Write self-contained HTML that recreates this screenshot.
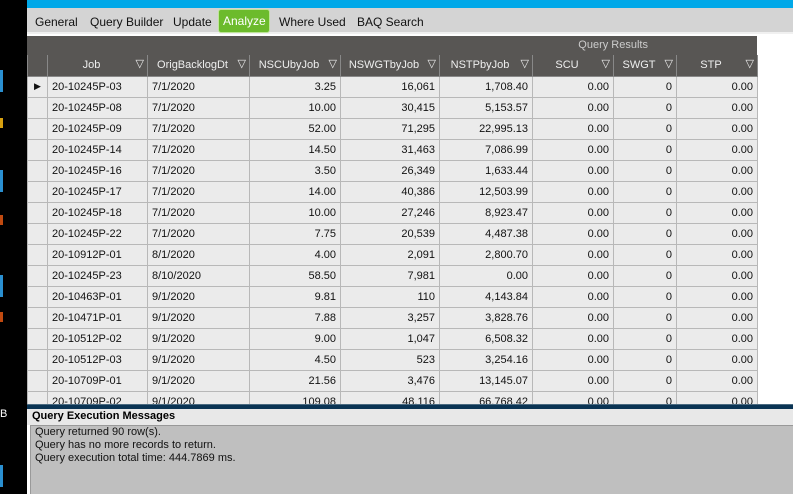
<!DOCTYPE html>
<html><head><style>
*{margin:0;padding:0;box-sizing:border-box}
body{width:793px;height:494px;overflow:hidden;background:#000;font-family:"Liberation Sans",Arial,sans-serif;font-size:11px;position:relative}
#main{position:absolute;left:27px;top:0;width:766px;height:494px;background:#fff}
#top{position:absolute;left:0;top:0;width:766px;height:8px;background:#00a8e8}
#tabs{position:absolute;left:0;top:8px;width:766px;height:26px;background:#d4d4d4;border-bottom:2px solid #f0f0f0}
.tab{position:absolute;top:7px;font-size:12px;color:#111}
#an{position:absolute;left:191px;top:1px;width:52px;height:24px;background:#6cbb2c;border:1px solid #bfe59a;border-radius:3px;color:#fff;font-size:12px;padding:4px 0 0 4px}
#qr{position:absolute;left:0;top:36px;width:730px;height:20px;background:#585654;color:#ccc;font-size:11px;text-align:right;padding:3px 109px 0 0}
table{position:absolute;left:0;top:55px;border-collapse:collapse;table-layout:fixed}
th{background:#585654;color:#eee;font-weight:normal;height:21px;border:1px solid #888;border-top:none;font-size:11px;position:relative;text-align:center;padding-right:12px}
th span{position:absolute;right:3px;top:2px;font-size:11px}
td{height:21px;border:1px solid #b8b8b8;background:#ebebeb;color:#111;padding:0 4px;white-space:nowrap;overflow:hidden;font-size:11px}
td.r{text-align:right}
td.h{background:#ebebeb;padding:0}
#sep{position:absolute;left:0;top:404px;width:766px;height:5px;background:#0a3454;border-top:1px solid #4a6a80}
#mh{position:absolute;left:0;top:409px;width:766px;height:16px;background:#e8e8e8;font-weight:bold;font-size:11px;padding:1px 0 0 5px}
#mb{position:absolute;left:3px;top:425px;width:763px;height:69px;background:#bfbfbf;border-top:1px solid #999;border-left:1px solid #999;padding:0 0 0 4px;font-size:11px;line-height:13px;color:#111}
.ls{position:absolute;left:0;width:3px;height:22px;background:#2a8fd0}
</style></head><body>
<div class="ls" style="top:70px"></div>
<div class="ls" style="top:170px"></div>
<div class="ls" style="top:275px"></div>
<div class="ls" style="top:465px"></div>
<div style="position:absolute;left:0;top:118px;width:3px;height:10px;background:#d7a010"></div>
<div style="position:absolute;left:0;top:215px;width:3px;height:10px;background:#c04a10"></div>
<div style="position:absolute;left:0;top:312px;width:3px;height:10px;background:#c04a10"></div>
<div style="position:absolute;left:0;top:408px;color:#fff;font-size:11px">B</div>
<div id="main">
<div id="top"></div>
<div id="tabs">
<span class="tab" style="left:8px">General</span>
<span class="tab" style="left:63px">Query Builder</span>
<span class="tab" style="left:146px">Update</span>
<div id="an">Analyze</div>
<span class="tab" style="left:252px">Where Used</span>
<span class="tab" style="left:330px">BAQ Search</span>
</div>
<div id="qr">Query Results</div>
<table>
<colgroup><col style="width:20px"><col style="width:100px"><col style="width:102px"><col style="width:91px"><col style="width:99px"><col style="width:93px"><col style="width:81px"><col style="width:63px"><col style="width:81px"></colgroup>
<tr><th style="padding:0"></th><th>Job<span>&#9661;</span></th><th>OrigBacklogDt<span>&#9661;</span></th><th>NSCUbyJob<span>&#9661;</span></th><th>NSWGTbyJob<span>&#9661;</span></th><th>NSTPbyJob<span>&#9661;</span></th><th>SCU<span>&#9661;</span></th><th>SWGT<span>&#9661;</span></th><th>STP<span>&#9661;</span></th></tr>
<tr><td class="h" style="text-align:center;font-size:9px">&#9654;</td><td>20-10245P-03</td><td>7/1/2020</td><td class="r">3.25</td><td class="r">16,061</td><td class="r">1,708.40</td><td class="r">0.00</td><td class="r">0</td><td class="r">0.00</td></tr>
<tr><td class="h"></td><td>20-10245P-08</td><td>7/1/2020</td><td class="r">10.00</td><td class="r">30,415</td><td class="r">5,153.57</td><td class="r">0.00</td><td class="r">0</td><td class="r">0.00</td></tr>
<tr><td class="h"></td><td>20-10245P-09</td><td>7/1/2020</td><td class="r">52.00</td><td class="r">71,295</td><td class="r">22,995.13</td><td class="r">0.00</td><td class="r">0</td><td class="r">0.00</td></tr>
<tr><td class="h"></td><td>20-10245P-14</td><td>7/1/2020</td><td class="r">14.50</td><td class="r">31,463</td><td class="r">7,086.99</td><td class="r">0.00</td><td class="r">0</td><td class="r">0.00</td></tr>
<tr><td class="h"></td><td>20-10245P-16</td><td>7/1/2020</td><td class="r">3.50</td><td class="r">26,349</td><td class="r">1,633.44</td><td class="r">0.00</td><td class="r">0</td><td class="r">0.00</td></tr>
<tr><td class="h"></td><td>20-10245P-17</td><td>7/1/2020</td><td class="r">14.00</td><td class="r">40,386</td><td class="r">12,503.99</td><td class="r">0.00</td><td class="r">0</td><td class="r">0.00</td></tr>
<tr><td class="h"></td><td>20-10245P-18</td><td>7/1/2020</td><td class="r">10.00</td><td class="r">27,246</td><td class="r">8,923.47</td><td class="r">0.00</td><td class="r">0</td><td class="r">0.00</td></tr>
<tr><td class="h"></td><td>20-10245P-22</td><td>7/1/2020</td><td class="r">7.75</td><td class="r">20,539</td><td class="r">4,487.38</td><td class="r">0.00</td><td class="r">0</td><td class="r">0.00</td></tr>
<tr><td class="h"></td><td>20-10912P-01</td><td>8/1/2020</td><td class="r">4.00</td><td class="r">2,091</td><td class="r">2,800.70</td><td class="r">0.00</td><td class="r">0</td><td class="r">0.00</td></tr>
<tr><td class="h"></td><td>20-10245P-23</td><td>8/10/2020</td><td class="r">58.50</td><td class="r">7,981</td><td class="r">0.00</td><td class="r">0.00</td><td class="r">0</td><td class="r">0.00</td></tr>
<tr><td class="h"></td><td>20-10463P-01</td><td>9/1/2020</td><td class="r">9.81</td><td class="r">110</td><td class="r">4,143.84</td><td class="r">0.00</td><td class="r">0</td><td class="r">0.00</td></tr>
<tr><td class="h"></td><td>20-10471P-01</td><td>9/1/2020</td><td class="r">7.88</td><td class="r">3,257</td><td class="r">3,828.76</td><td class="r">0.00</td><td class="r">0</td><td class="r">0.00</td></tr>
<tr><td class="h"></td><td>20-10512P-02</td><td>9/1/2020</td><td class="r">9.00</td><td class="r">1,047</td><td class="r">6,508.32</td><td class="r">0.00</td><td class="r">0</td><td class="r">0.00</td></tr>
<tr><td class="h"></td><td>20-10512P-03</td><td>9/1/2020</td><td class="r">4.50</td><td class="r">523</td><td class="r">3,254.16</td><td class="r">0.00</td><td class="r">0</td><td class="r">0.00</td></tr>
<tr><td class="h"></td><td>20-10709P-01</td><td>9/1/2020</td><td class="r">21.56</td><td class="r">3,476</td><td class="r">13,145.07</td><td class="r">0.00</td><td class="r">0</td><td class="r">0.00</td></tr>
<tr><td class="h"></td><td>20-10709P-02</td><td>9/1/2020</td><td class="r">109.08</td><td class="r">48,116</td><td class="r">66,768.42</td><td class="r">0.00</td><td class="r">0</td><td class="r">0.00</td></tr>
</table>
<div id="sep"></div>
<div id="mh">Query Execution Messages</div>
<div id="mb">Query returned 90 row(s).<br>Query has no more records to return.<br>Query execution total time: 444.7869 ms.</div>
</div>
</body></html>
